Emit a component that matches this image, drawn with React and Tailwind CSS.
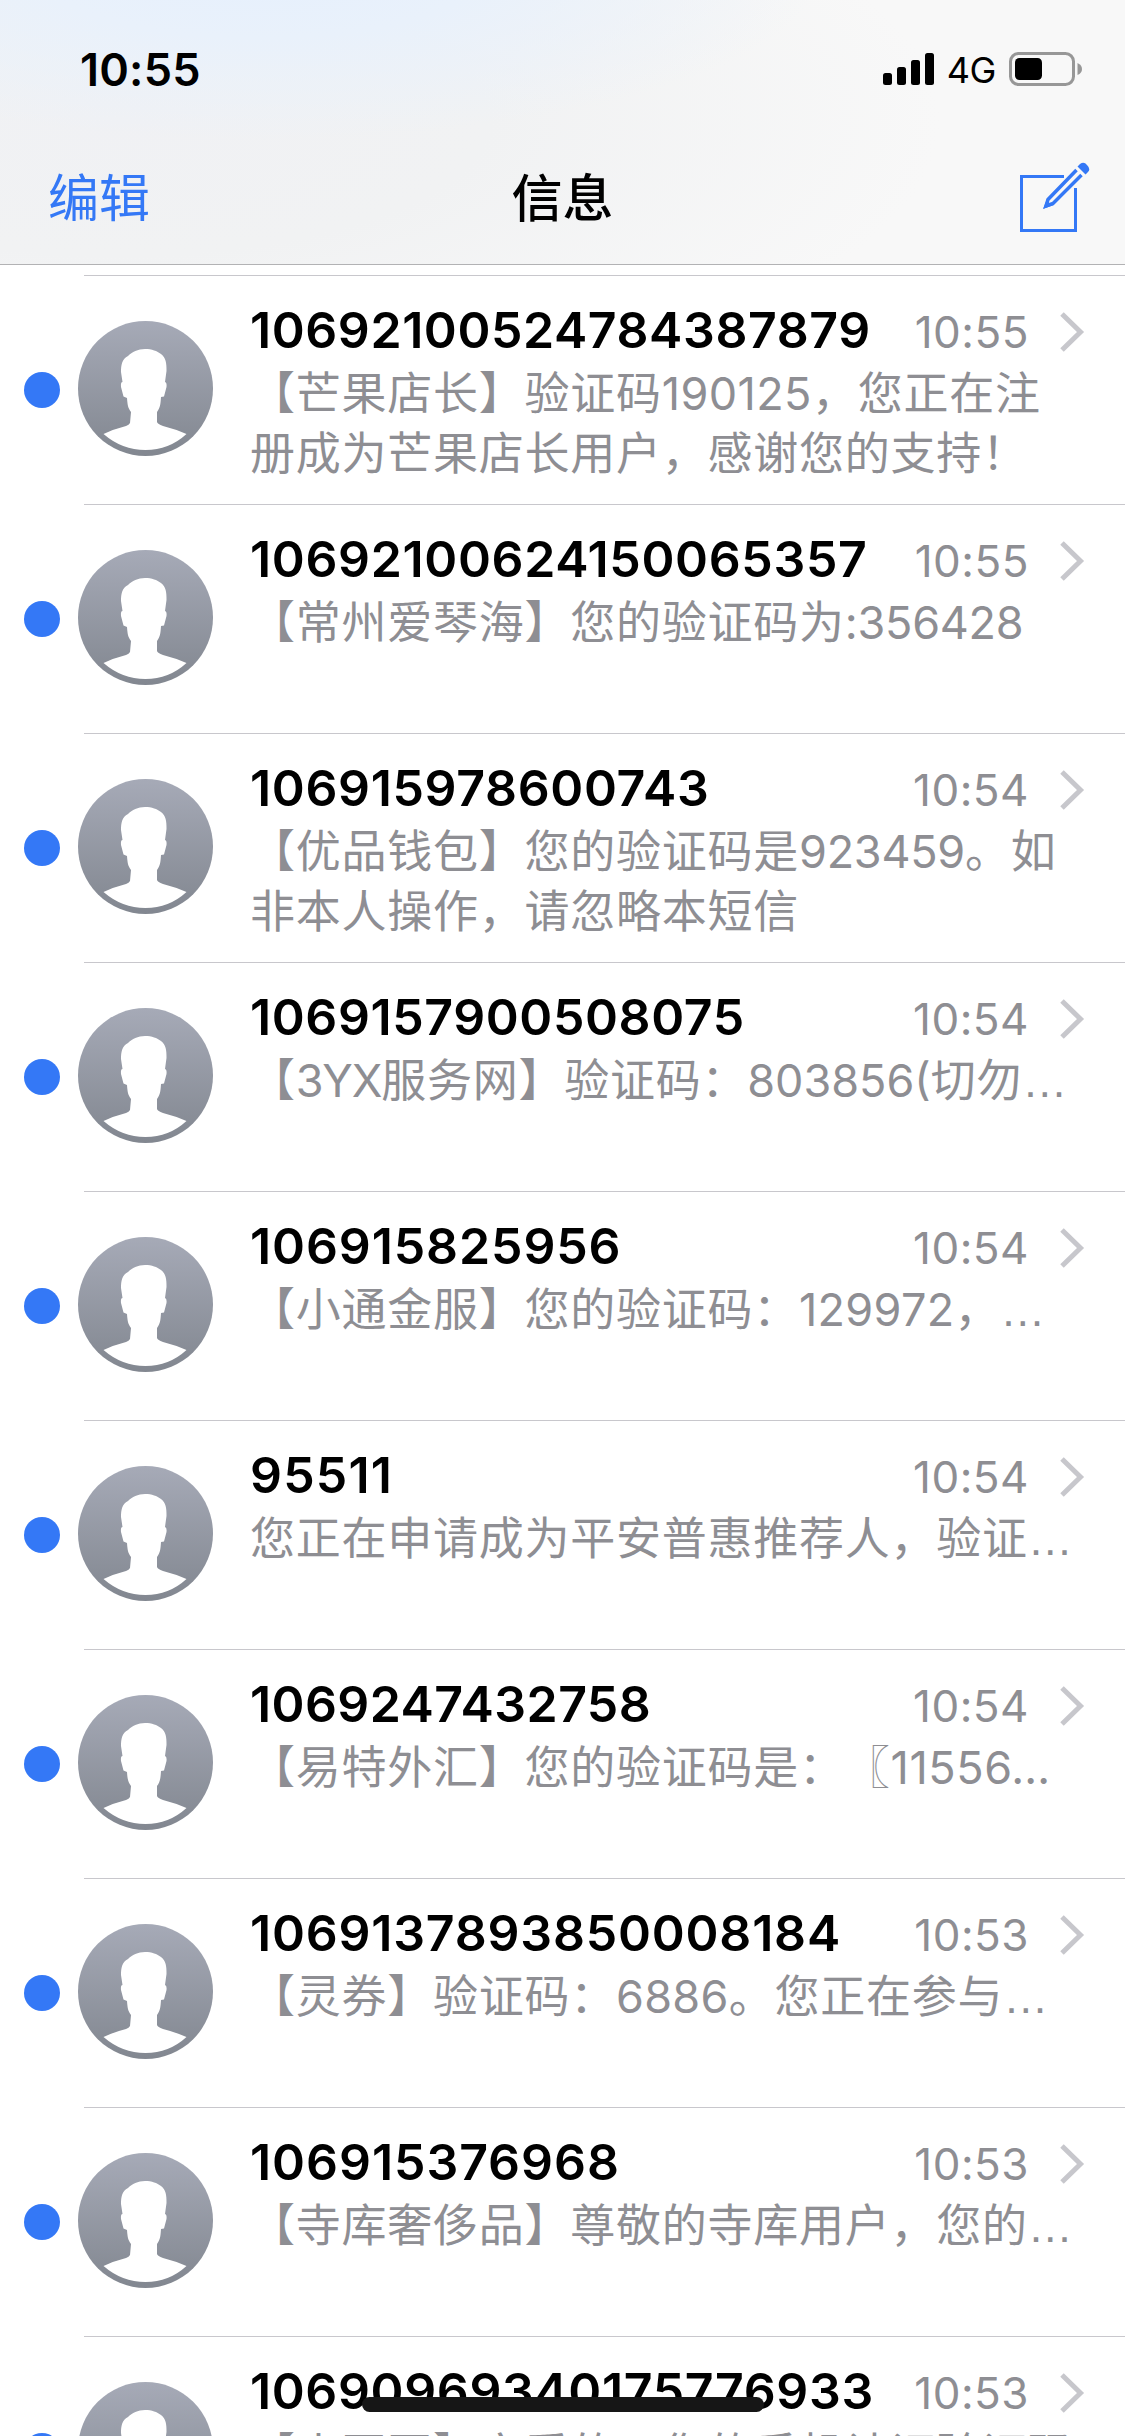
const ELLIPSIS = "font-['Liberation_Sans'] tracking-normal";

const rows = [
  {
    from: "10692100524784387879",
    tracking: "tracking-[0.580px]",
    time: "10:55",
    lines: [
      [["【芒果店长】验证码"], ["190125", "tracking-[0.400px]"], ["，您正在注"]],
      [["册成为芒果店长用户，感谢您的支持！"]],
    ],
  },
  {
    from: "10692100624150065357",
    tracking: "tracking-[0.650px]",
    time: "10:55",
    lines: [[["【常州爱琴海】您的验证码为"], [":356428", "tracking-[-0.250px]"]]],
  },
  {
    from: "106915978600743",
    tracking: "tracking-[0.650px]",
    time: "10:54",
    lines: [
      [["【优品钱包】您的验证码是"], ["923459", "tracking-[-0.250px]"], ["。如"]],
      [["非本人操作，请忽略本短信"]],
    ],
  },
  {
    from: "1069157900508075",
    tracking: "tracking-[0.600px]",
    time: "10:54",
    lines: [
      [
        ["【"],
        ["3YX", "tracking-[-1.200px]"],
        ["服务网】验证码："],
        ["803856(", "tracking-[0px]"],
        ["切勿"],
        ["…", ELLIPSIS],
      ],
    ],
  },
  {
    from: "106915825956",
    tracking: "tracking-[0.900px]",
    time: "10:54",
    lines: [[["【小通金服】您的验证码："], ["129972", "tracking-[0.300px]"], ["，"], ["…", ELLIPSIS]]],
  },
  {
    from: "95511",
    tracking: "tracking-[1.200px]",
    time: "10:54",
    lines: [[["您正在申请成为平安普惠推荐人，验证"], ["…", ELLIPSIS]]],
  },
  {
    from: "1069247432758",
    tracking: "tracking-[0.420px]",
    time: "10:54",
    lines: [[["【易特外汇】您的验证码是：〖"], ["11556…", "tracking-[0.600px]"]]],
  },
  {
    from: "1069137893850008184",
    tracking: "tracking-[0.800px]",
    time: "10:53",
    lines: [[["【灵券】验证码："], ["6886", "tracking-[0.300px]"], ["。您正在参与"], ["…", ELLIPSIS]]],
  },
  {
    from: "106915376968",
    tracking: "tracking-[0.950px]",
    time: "10:53",
    lines: [[["【寺库奢侈品】尊敬的寺库用户，您的"], ["…", ELLIPSIS]]],
  },
  {
    from: "10690969340175776933",
    tracking: "tracking-[0.620px]",
    time: "10:53",
    lines: [[["【小豆豆】亲爱的，您的手机认证验证码"]]],
  },
];

function Avatar() {
  return (
    <svg className="mt-[45px] ml-[18px] h-[135px] w-[135px] shrink-0" viewBox="0 0 135 135">
      <defs>
        <linearGradient id="avatar" x1="0" y1="0" x2="0" y2="1">
          <stop offset="0" stopColor="#a6aab7" />
          <stop offset="1" stopColor="#828790" />
        </linearGradient>
      </defs>
      <circle cx="67.5" cy="67.5" r="67.5" fill="url(#avatar)" />
      <path
        fill="#fff"
        d="M67 28C60 28 54 31 50 35C44 38 43 44 43 51L44.500 61Q42.500 61 43 66L45.500 75.500L49 77C49.500 84 50 87 53 91L52 102Q51 104 48 105Q36 108 25.500 113Q44 129 67.500 129T108.500 113Q97 108 85 105Q79.500 103 79 101V91C82 87 82.500 84 83 76L86 75.500L88.500 66Q89 61.500 87 61L88.500 50C88.500 42 88 37 83 33C79 30 74 28 67 28Z"
      />
    </svg>
  );
}

function Row({ row }) {
  return (
    <li>
      <div className="ml-[84px] h-px bg-[#c8c7cc]" />
      <div className="flex h-[228px] items-start">
        <span className="mt-[96px] ml-6 h-9 w-9 shrink-0 rounded-full bg-[#3478f6]" />
        <Avatar />
        <div className="ml-[37px] w-[875px] shrink-0 whitespace-nowrap">
          <div className="mt-[25px] flex h-[60px] items-end">
            <span className={`grow text-[50px] leading-[62px] font-semibold text-black ${row.tracking}`}>{row.from}</span>
            <span className="text-[44px] leading-[57px] tracking-[0.500px] text-[#8e8e93]">{row.time}</span>
            <svg
              className="mr-[40px] mb-[8px] ml-[30px] h-[42px] w-[26px] shrink-0"
              viewBox="0 0 26 42"
              fill="none"
              stroke="#c7c7cc"
              strokeWidth="5"
            >
              <path d="M3 3L21.500 21L3 39" />
            </svg>
          </div>
          <p className="mt-[3px] text-[45px] leading-[60px] tracking-[0.750px] text-[#8e8e93]">
            {row.lines.map((line, i) => (
              <span key={i} className="block h-[60px]">
                {line.map(([text, style], j) => (
                  <span key={j} className={style}>
                    {text}
                  </span>
                ))}
              </span>
            ))}
          </p>
        </div>
      </div>
    </li>
  );
}

export default function App() {
  return (
    <main className="relative flex h-[2436px] w-[1125px] flex-col overflow-hidden bg-white font-['Inter','Noto_Sans_CJK_SC',sans-serif] [text-spacing-trim:space-all]">
      <header className="h-[265px] shrink-0 border-b border-[#b2b2b4] bg-[#f8f8f8] bg-[radial-gradient(ellipse_560px_170px_at_260px_-30px,#e6f0fd_0%,#e9f1fb_40%,transparent_100%),radial-gradient(ellipse_820px_300px_at_120px_120px,#f0f1f4_0%,#f1f2f3_45%,#f8f8f8_100%)]">
        <div className="flex h-[138px] items-center justify-between pr-[42px] pl-[80px]">
          <time className="mt-[2px] text-[45px] font-semibold tracking-[0.200px]">10:55</time>
          <div className="flex items-center">
            <svg className="h-[36px] w-[51px]" viewBox="0 0 51 36">
              <rect x="0" y="22" width="9" height="12" rx="2.500" />
              <rect x="14" y="16" width="9" height="18" rx="2.500" />
              <rect x="28" y="9" width="9" height="25" rx="2.500" />
              <rect x="42" y="2" width="9" height="32" rx="2.500" />
            </svg>
            <span className="mt-[2px] ml-[13px] text-[36px] leading-[36px] tracking-[-0.400px]">4G</span>
            <svg className="ml-[13px] h-[36px] w-[74px]" viewBox="0 0 74 36">
              <rect x="1.500" y="2.500" width="63" height="31" rx="8" fill="none" stroke="#979797" strokeWidth="3" />
              <rect x="6" y="7" width="27" height="22" rx="4.500" />
              <path d="M68.500 12Q73 14 73 18T68.500 24Z" fill="#979797" />
            </svg>
          </div>
        </div>
        <nav className="grid h-[126px] grid-cols-3 items-center px-[48px] text-[51px]">
          <span className="mb-[3px] text-[#3478f6]">编辑</span>
          <span className="mb-[3px] text-center font-medium">信息</span>
          <svg
            className="mr-[-13px] mb-[8px] h-[70px] w-[70px] justify-self-end"
            viewBox="20 22 70 70"
            fill="none"
            stroke="#3478f6"
            strokeWidth="3"
          >
            <path d="M64 36.500H21.500V90.500H75.500V48" />
            <path strokeWidth="3.500" d="M76.500 30L48 59.500L46 66L53 63.500L81.500 35" />
            <path d="M47 59L43 69L54 65L50 64L48 61Z" fill="#3478f6" stroke="none" />
            <path d="M77.500 26.500L80 24Q84 21 87 25Q91 29 88 32L85.500 34.500Z" fill="#3478f6" stroke="none" />
          </svg>
        </nav>
      </header>
      <ul className="mt-[10px] flex shrink-0 flex-col">
        {rows.map((row) => (
          <Row key={row.from} row={row} />
        ))}
      </ul>
      <span className="absolute top-[2397px] left-[362px] h-[15px] w-[402px] rounded-full bg-[#161616]" />
    </main>
  );
}
